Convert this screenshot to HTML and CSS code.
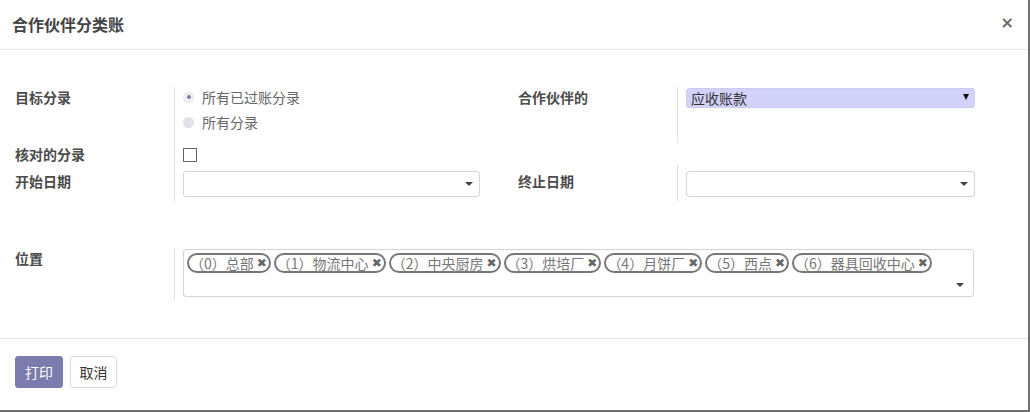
FILE: index.html
```html
<!DOCTYPE html>
<html lang="zh-CN">
<head>
    <meta charset="UTF-8">
    <title>合作伙伴分类账</title>
    <link rel="stylesheet" href="styles.css">
</head>
<body>
    <div class="modal">
        <div class="modal-header">
            <h4 class="modal-title">合作伙伴分类账</h4>
            <span class="close">×</span>
        </div>

        <div class="modal-body">
            <div class="group">
                <!-- row 1 -->
                <div class="cell label">目标分录</div>
                <div class="cell field">
                    <div class="radio-item"><span class="radio checked"></span>所有已过账分录</div>
                    <div class="radio-item"><span class="radio"></span>所有分录</div>
                </div>
                <div class="cell label label-2">合作伙伴的</div>
                <div class="cell field">
                    <div class="select required">应收账款<span class="caret dark"></span></div>
                </div>

                <!-- row 2 -->
                <div class="cell label center">核对的分录</div>
                <div class="cell field center"><span class="checkbox"></span></div>
                <div class="cell"></div>
                <div class="cell"></div>

                <!-- row 3 -->
                <div class="cell label top6">开始日期</div>
                <div class="cell field top6">
                    <div class="select date"><span class="caret"></span></div>
                </div>
                <div class="cell label label-2 top6">终止日期</div>
                <div class="cell field top6">
                    <div class="select date date-right"><span class="caret"></span></div>
                </div>
            </div>

            <div class="group group-wide">
                <div class="cell label">位置</div>
                <div class="cell field">
                    <div class="tag-box">
                        <span class="tag">（0）总部<i>✖</i></span>
                        <span class="tag">（1）物流中心<i>✖</i></span>
                        <span class="tag">（2）中央厨房<i>✖</i></span>
                        <span class="tag">（3）烘培厂<i>✖</i></span>
                        <span class="tag">（4）月饼厂<i>✖</i></span>
                        <span class="tag">（5）西点<i>✖</i></span>
                        <span class="tag">（6）器具回收中心<i>✖</i></span>
                        <span class="caret"></span>
                    </div>
                </div>
            </div>
        </div>

        <div class="modal-footer">
            <button class="btn btn-primary">打印</button>
            <button class="btn btn-default">取消</button>
        </div>
    </div>
</body>
</html>
```

FILE: styles.css
```css
* {
    margin: 0;
    padding: 0;
    box-sizing: border-box;
}

body {
    background: #fff;
    font-family: 'Noto Sans CJK SC', 'Noto Sans', sans-serif;
    font-size: 14px;
    color: #4c4c4c;
}

.modal {
    width: 1030px;
    height: 412px;
    border-right: 2px solid #6f6f6f;
    border-bottom: 2px solid #6f6f6f;
    display: flex;
    flex-direction: column;
}

.modal-header {
    height: 50px;
    border-bottom: 1px solid #e5e5e5;
    display: flex;
    align-items: center;
    justify-content: space-between;
    padding: 0 14px 0 12px;
}

.modal-title {
    font-size: 16px;
    font-weight: bold;
    color: #444;
    line-height: 20px;
    margin-top: -2px;
}

.close {
    font-family: 'DejaVu Sans', sans-serif;
    font-size: 16px;
    font-weight: bold;
    color: #666;
    line-height: 20px;
    margin-top: -4px;
}

.modal-body {
    height: 288px;
    padding: 37px 0 0 15px;
}

.group {
    display: grid;
    grid-template-columns: 160px 335px 168px 305px;
    grid-template-rows: 56px 22px 37px;
}

.group-wide {
    margin-top: 46px;
    grid-template-columns: 160px 799px;
    grid-template-rows: 52px;
}

.cell {
    line-height: 20px;
}

.label {
    font-weight: bold;
    color: #4c4c4c;
    border-right: 1px solid #e2e2e2;
}

.label-2 {
    padding-left: 8px;
}

.field {
    padding-left: 8px;
}

.center {
    display: flex;
    align-items: center;
}

.top6 {
    padding-top: 6px;
}

.radio-item {
    display: flex;
    align-items: center;
    color: #666;
    height: 20px;
    margin-bottom: 5px;
}

.radio {
    width: 11px;
    height: 11px;
    border-radius: 50%;
    background: #e1e1e8;
    margin-right: 8px;
    display: inline-flex;
    align-items: center;
    justify-content: center;
}

.radio.checked {
    background: #f1f1f4;
    border: 1px solid #e4e4ea;
}

.radio.checked::after {
    content: "";
    width: 4px;
    height: 4px;
    border-radius: 50%;
    background: #7c7bad;
}

.checkbox {
    width: 14px;
    height: 14px;
    border: 1px solid #666;
    margin-top: 1px;
}

.select {
    position: relative;
    border-radius: 3px;
    height: 20px;
    line-height: 18px;
    padding-left: 4px;
    color: #333;
}

.select.required {
    margin-top: 1px;
    width: 289px;
    background: #d2d2fa;
    border: 1px solid #ccccf0;
}

.select.date {
    width: 297px;
    height: 26px;
    border: 1px solid #d4d4d4;
}

.select.date-right {
    width: 289px;
}

.caret {
    position: absolute;
    right: 6px;
    top: 50%;
    margin-top: -2px;
    width: 0;
    height: 0;
    border-top: 4px solid #444;
    border-left: 4px solid transparent;
    border-right: 4px solid transparent;
}

.caret.dark {
    right: 5px;
    margin-top: -4px;
    border-top: 6px solid #111;
    border-left: 3.5px solid transparent;
    border-right: 3.5px solid transparent;
}

.tag-box {
    position: relative;
    width: 791px;
    height: 48px;
    margin-top: 1px;
    border: 1px solid #d4d4d4;
    border-radius: 3px;
    padding: 3px 3px;
    display: flex;
    flex-wrap: wrap;
    align-content: flex-start;
    gap: 3px;
}

.tag-box .caret {
    top: auto;
    bottom: 9px;
    right: 9px;
    margin-top: 0;
}

.tag {
    display: inline-flex;
    align-items: center;
    height: 20px;
    line-height: 16px;
    border: 2px solid #777;
    border-radius: 10px;
    padding: 0 2px 0 1px;
    color: #777;
    font-size: 14px;
    white-space: nowrap;
}

.tag i {
    font-style: normal;
    font-family: 'DejaVu Sans', sans-serif;
    font-size: 12px;
    color: #666;
    margin-left: 3px;
}

.modal-footer {
    flex: 1;
    border-top: 1px solid #e5e5e5;
    padding: 17px 15px 0;
    display: flex;
    gap: 7px;
    align-items: flex-start;
}

.btn {
    font-family: 'Noto Sans CJK SC', sans-serif;
    font-size: 14px;
    height: 32px;
    padding: 0;
    white-space: nowrap;
    border-radius: 3px;
    cursor: pointer;
}

.btn-primary {
    width: 48px;
    background: #7c7bad;
    border: 1px solid #7c7bad;
    color: #fff;
}

.btn-default {
    width: 47px;
    background: #fff;
    border: 1px solid #dcdcdc;
    color: #333;
}
```
